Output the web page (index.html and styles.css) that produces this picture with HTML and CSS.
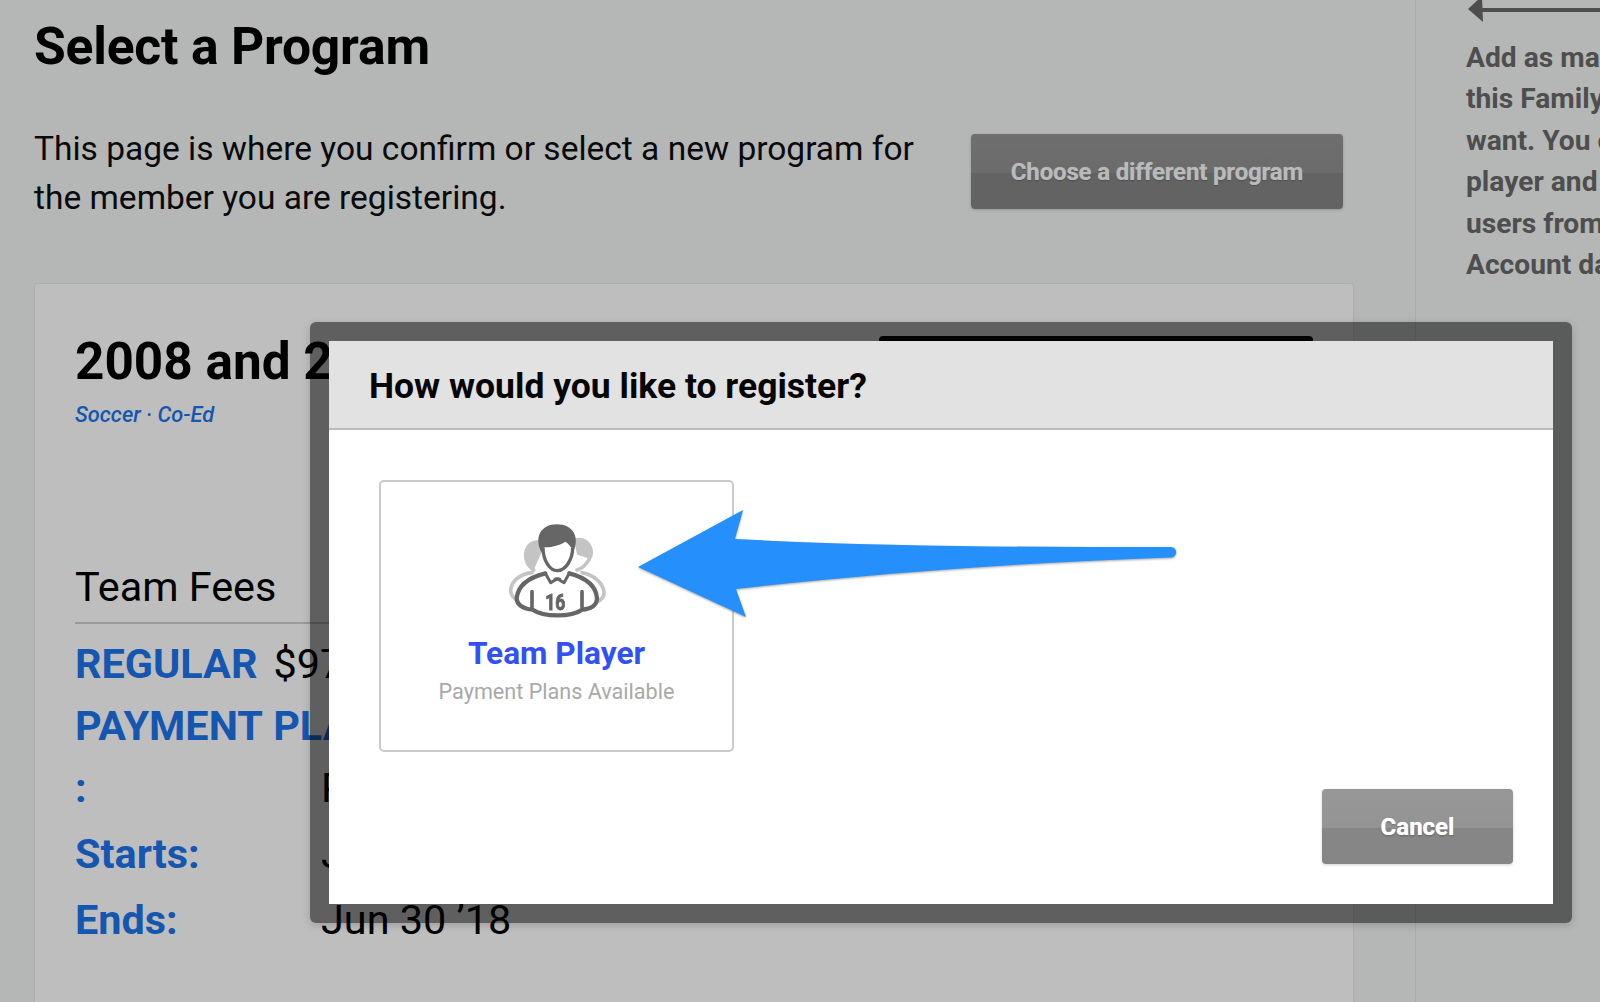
FILE: index.html
```html
<!DOCTYPE html>
<html lang="en">
<head>
<meta charset="utf-8">
<title>Select a Program</title>
<link rel="stylesheet" href="styles.css">
</head>
<body>
<div class="page">
  <main class="main">
    <h1 class="page-title">Select a Program</h1>
    <div class="intro">
      <p class="intro-text">This page is where you confirm or select a new program for the member you are registering.</p>
      <button class="btn btn-choose" type="button">Choose a different program</button>
    </div>
    <section class="program-card">
      <div class="program-head">
        <div>
          <h2 class="program-title">2008 and 2009 Boys</h2>
          <div class="program-meta">Soccer · Co-Ed</div>
        </div>
        <div class="program-action"></div>
      </div>
      <h3 class="fees-title">Team Fees</h3>
      <div class="fees">
        <div class="fee-row"><span class="fee-label">REGULAR</span><span class="fee-price">$975.00</span></div>
        <div class="fee-grid">
          <div class="fee-label">PAYMENT&nbsp;PLAN :</div><div class="fee-value">Per Month</div>
          <div class="fee-label">Starts:</div><div class="fee-value">Jul 1 ’17</div>
          <div class="fee-label">Ends:</div><div class="fee-value">Jun 30 ’18</div>
        </div>
      </div>
    </section>
  </main>
  <aside class="aside">
    <svg class="aside-arrow" width="134" height="24" viewBox="0 0 134 24" aria-hidden="true"><path d="M0 9 14 -4 15 22 0 9Z" fill="#4d4d4d"/><rect x="14" y="8" width="120" height="4" fill="#4d4d4d"/></svg>
    <p class="aside-text">Add as many users to<br>this Family Account as you<br>want. You can add a<br>player and remove<br>users from the<br>Account dashboard.</p>
  </aside>
</div>

<div class="modal" role="dialog">
  <div class="modal-inner">
    <header class="modal-head"><h2 class="modal-title">How would you like to register?</h2></header>
    <div class="modal-body">
      <a class="option">
        <svg class="option-icon" width="150" height="120" viewBox="0 0 450 360" aria-hidden="true">
          <g fill="none" stroke="#c4c4c4" stroke-width="11" stroke-linecap="round">
            <path d="M155 180C122 160 122 105 160 97C172 94 180 96 190 102" fill="#c4c4c4"/>
            <path d="M280 90C320 82 340 125 320 150C312 165 300 175 285 180" />
            <path d="M282 92C315 88 330 115 322 140L290 130Z" fill="#c4c4c4"/>
            <path d="M150 188C112 192 88 215 86 240C86 255 95 265 108 270"/>
            <path d="M300 188C335 195 362 218 366 245C368 262 355 272 340 278"/>
          </g>
          <path d="M178 126C156 82 176 43 225 43C274 43 294 82 274 126C268 110 258 100 250 95C228 110 196 108 178 126Z" fill="#666"/>
          <path d="M183 112C183 155 205 182 226 182C250 182 272 150 272 112" fill="#fff" stroke="#666" stroke-width="10"/>
          <path d="M190 190C150 200 108 222 104 265C104 285 125 297 152 299C185 322 268 322 300 299C328 297 345 285 345 265C342 222 300 200 262 190" fill="#fff" stroke="#666" stroke-width="13" stroke-linecap="round"/>
          <path d="M190 190 206 218 226 206 246 218 262 190" fill="none" stroke="#666" stroke-width="9" stroke-linejoin="round"/>
          <path d="M219 207H233" stroke="#666" stroke-width="9" stroke-linecap="round"/>
          <path d="M150 245V292M300 245V292" stroke="#666" stroke-width="11" stroke-linecap="round"/>
          <text x="220" y="299" textLength="60" lengthAdjust="spacingAndGlyphs" class="icon-number">16</text>
        </svg>
        <span class="option-title">Team Player</span>
        <span class="option-sub">Payment Plans Available</span>
      </a>
    </div>
    <footer class="modal-foot"><button class="btn btn-cancel" type="button">Cancel</button></footer>
  </div>
</div>

<svg class="callout" width="560" height="140" viewBox="0 0 560 140" aria-hidden="true">
  <path d="M1 57 106 0 98 29C250 37 400 37 534 37A5.25 5.25 0 0 1 534 47.5C400 52 250 62 99 79L109 107Z" fill="#2590fb"/>
</svg>
</body>
</html>
```
FILE: styles.css
```css
* { box-sizing: border-box; }
html, body { margin: 0; height: 100%; }
body {
  position: relative;
  height: 1002px;
  overflow: hidden;
  background: #b5b7b6;
  color: #000;
  font-family: Roboto, "Liberation Sans", sans-serif;
}
.page { display: flex; height: 1002px; overflow: hidden; }
.main {
  flex: 0 0 1416px;
  display: flex;
  flex-direction: column;
  padding: 16px 61px 0 34px;
  border-right: 1px solid #a9abaa;
}
.page-title { margin: 0; font-size: 51.6px; line-height: 62px; font-weight: 700; letter-spacing: -.2px; }
.intro { display: flex; justify-content: space-between; align-items: flex-start; margin: 46px 11px 0 0; }
.intro-text { margin: 0; width: 900px; font-size: 33.5px; line-height: 49px; color: #0a0a0a; }
.btn {
  border: 0;
  border-radius: 4px;
  font: 700 24px Roboto, "Liberation Sans", sans-serif;
  box-shadow: 0 1px 3px rgba(0, 0, 0, .18);
}
.btn-choose {
  flex: none;
  width: 372px;
  height: 75px;
  margin: 10px 0 0;
  color: #b9bbbb;
  letter-spacing: -.15px;
  background: linear-gradient(#6f6f6f 0, #6b6b6b 52%, #636363 52%, #636363 100%);
  text-shadow: 0 0 1px rgba(185, 187, 187, .7), 0 1px 1px rgba(0, 0, 0, .3);
}
.program-card {
  flex: 1;
  min-height: 0;
  margin-top: 61px;
  padding: 47px 40px 0;
  background: #bebebe;
  border: 1px solid #adafae;
  border-bottom: 0;
  border-radius: 4px 4px 0 0;
}
.program-head { display: flex; justify-content: space-between; height: 0; }
.program-title { margin: 0; font-size: 51.3px; line-height: 62px; font-weight: 700; white-space: nowrap; }
.program-meta { margin-top: 8px; font-size: 21.8px; line-height: 28px; font-weight: 500; font-style: italic; color: #1557b0; }
.program-action {
  flex: none;
  width: 434px;
  height: 60px;
  margin: 5px 0 0;
  background: #050505;
  border-radius: 4px;
}
.fees-title {
  margin: 229px 0 0;
  padding-bottom: 8px;
  font-size: 41.4px;
  line-height: 54px;
  font-weight: 400;
  border-bottom: 2px solid #9a9a9a;
}
.fee-row { display: flex; gap: 16px; align-items: baseline; margin-top: 10px; }
.fee-label { font-size: 41.4px; line-height: 61px; font-weight: 700; color: #1557b0; }
.fee-price { font-size: 41.4px; line-height: 61px; }
.fee-grid { display: grid; grid-template-columns: 246px 1fr; }
.fee-grid .fee-label { line-height: 62px; padding-bottom: 4px; }
.fee-value { display: flex; align-items: flex-end; padding-bottom: 4px; font-size: 41.4px; line-height: 62px; white-space: nowrap; }

.aside { flex: 1; min-width: 0; padding-left: 50px; overflow: hidden; }
.aside-arrow { display: block; margin-left: 2px; }
.aside-text {
  margin: 13px 0 0;
  font-size: 28.2px;
  line-height: 41.4px;
  font-weight: 700;
  color: #4e4e4e;
  white-space: nowrap;
}

.modal {
  position: absolute;
  left: 310px;
  top: 322px;
  width: 1262px;
  height: 601px;
  padding: 19px;
  background: rgba(0, 0, 0, .5);
  border-radius: 6px;
  box-shadow: 0 2px 8px rgba(0, 0, 0, .18);
}
.modal-inner { display: flex; flex-direction: column; height: 100%; background: #fff; }
.modal-head {
  flex: none;
  height: 89px;
  padding: 2px 0 0 40px;
  display: flex;
  align-items: center;
  background: #e2e2e2;
  border-bottom: 2px solid #bcbcbc;
}
.modal-title { margin: 0; font-size: 35.5px; font-weight: 700; line-height: 44px; color: #050505; }
.modal-body { flex: 1; padding: 50px 0 0 50px; }
.option {
  width: 355px;
  height: 272px;
  display: flex;
  flex-direction: column;
  align-items: center;
  padding-top: 28px;
  border: 2px solid #cacaca;
  border-radius: 5px;
}
.option-icon { display: block; filter: blur(.5px); }
.icon-number { font: 700 68px Roboto, "Liberation Sans", sans-serif; fill: #666; stroke: #666; stroke-width: 3px; text-anchor: middle; }
.option-title { margin-top: 5px; font-size: 31.6px; line-height: 38px; font-weight: 700; color: #3350f5; }
.option-sub { margin-top: 4px; font-size: 21.6px; line-height: 30px; color: #a9a9a9; }
.modal-foot { flex: none; display: flex; justify-content: flex-end; padding: 0 40px 40px 0; }
.btn-cancel {
  width: 191px;
  height: 75px;
  color: #fff;
  background: linear-gradient(#979797 0, #949494 52%, #868686 52%, #868686 100%);
  text-shadow: 0 0 1px rgba(255, 255, 255, .8), 0 1px 2px rgba(0, 0, 0, .35);
}
.callout {
  position: absolute;
  left: 637px;
  top: 510px;
  overflow: visible;
  filter: drop-shadow(0 1px 1px rgba(0, 0, 0, .35));
}
```
